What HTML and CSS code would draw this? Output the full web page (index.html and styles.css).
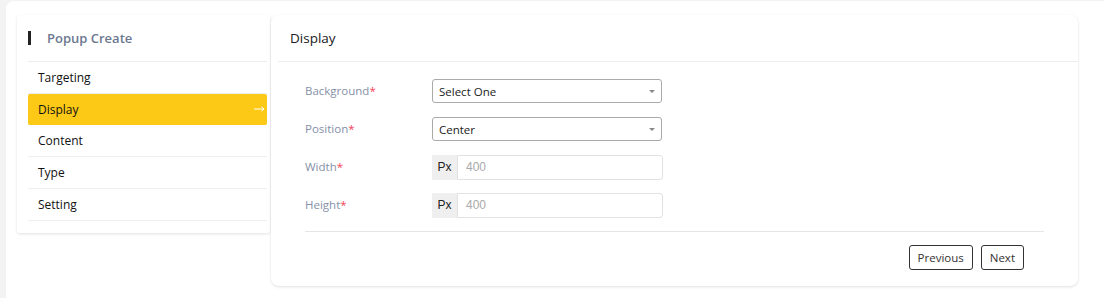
FILE: index.html
```html
<!DOCTYPE html>
<html>
<head>
<meta charset="utf-8">
<link rel="stylesheet" href="styles.css">
</head>
<body>
<div class="page">
  <aside class="side">
    <div class="side-title"><span class="bar"></span><span>Popup Create</span></div>
    <ul class="menu">
      <li class="item">Targeting</li>
      <li class="item active">Display<svg class="arrow" width="11" height="6" viewBox="0 0 11 6"><path d="M0 3H10M7.5 0.8L10 3L7.5 5.2" fill="none" stroke="#fff" stroke-width="1"/></svg></li>
      <li class="item">Content</li>
      <li class="item">Type</li>
      <li class="item">Setting</li>
    </ul>
  </aside>
  <section class="main">
    <div class="main-head">Display</div>
    <div class="form">
      <div class="row">
        <label class="lbl">Background<span class="req">*</span></label>
        <div class="select"><span>Select One</span><span class="caret"></span></div>
      </div>
      <div class="row">
        <label class="lbl">Position<span class="req">*</span></label>
        <div class="select"><span>Center</span><span class="caret"></span></div>
      </div>
      <div class="row">
        <label class="lbl">Width<span class="req">*</span></label>
        <div class="group"><span class="addon">Px</span><span class="inp">400</span></div>
      </div>
      <div class="row">
        <label class="lbl">Height<span class="req">*</span></label>
        <div class="group"><span class="addon">Px</span><span class="inp">400</span></div>
      </div>
      <div class="footer">
        <button class="btn">Previous</button>
        <button class="btn">Next</button>
      </div>
    </div>
  </section>
</div>
</body>
</html>
```

FILE: styles.css
```css
html, body { margin: 0; padding: 0; }
body {
  background: #f3f3f3;
  font-family: "Open Sans", "Liberation Sans", sans-serif;
  width: 1104px;
  height: 298px;
  overflow: hidden;
}
.page {
  margin: 1px 0 0 6px;
  height: 297px;
  background: #fff;
  border-top-left-radius: 8px;
  padding: 14px 26px 0 11px;
  box-sizing: border-box;
  display: flex;
  align-items: flex-start;
  gap: 1px;
}
.side {
  width: 253px;
  background: #fff;
  box-shadow: 0 1px 3px rgba(0,0,0,0.12);
  border-radius: 3px;
  padding: 0 3px 12px 11px;
  box-sizing: border-box;
}
.side-title {
  height: 47px;
  display: flex;
  align-items: center;
  gap: 16px;
  font-size: 13px;
  font-weight: 600;
  color: #6b7890;
  border-bottom: 1px solid #ececec;
  box-sizing: border-box;
}
.bar { width: 3px; height: 14px; background: #222; display: block; }
.menu { list-style: none; margin: 0; padding: 0; }
.item {
  height: 32px;
  box-sizing: border-box;
  border-bottom: 1px solid #eeeeee;
  padding-left: 10px;
  display: flex;
  align-items: center;
  font-size: 12px;
  color: #111;
}
.item.active {
  background: #fcc917;
  border-bottom-color: #fcc917;
  border-radius: 2px;
  justify-content: space-between;
  padding-right: 2px;
  height: 31px;
}
.arrow { display: block; }
.main {
  width: 807px;
  height: 271px;
  background: #fff;
  border-radius: 8px;
  box-shadow: 0 1px 3px rgba(0,0,0,0.13);
  box-sizing: border-box;
}
.main-head {
  height: 47px;
  box-sizing: border-box;
  margin-left: 7px;
  padding-left: 12px;
  display: flex;
  align-items: center;
  font-size: 13.5px;
  color: #1a1a1a;
  border-bottom: 1px solid #ececec;
}
.form {
  padding: 17px 34px 0 34px;
}
.row {
  display: flex;
  align-items: center;
  height: 24px;
  margin-bottom: 14px;
}
.lbl {
  width: 127px;
  font-size: 11.5px;
  color: #8590a8;
  margin-top: -1px;
}
.req { color: #f0455a; }
.select {
  width: 230px;
  height: 24px;
  box-sizing: border-box;
  border: 1px solid #aaaaaa;
  border-radius: 3px;
  display: flex;
  align-items: center;
  justify-content: space-between;
  padding: 0 6px 0 6px;
  font-size: 11.5px;
  color: #222;
}
.caret {
  width: 0; height: 0;
  border-left: 3px solid transparent;
  border-right: 3px solid transparent;
  border-top: 3px solid #888;
}
.group {
  width: 231px;
  height: 25px;
  display: flex;
}
.addon {
  width: 25px;
  background: #efefef;
  font-family: "Liberation Sans", Arial, sans-serif;
  font-size: 12px;
  color: #222;
  display: flex;
  align-items: center;
  justify-content: center;
}
.inp {
  flex: 1;
  border: 1px solid #e2e2e2;
  border-radius: 0 3px 3px 0;
  padding-left: 8px;
  display: flex;
  align-items: center;
  font-family: "Liberation Sans", Arial, sans-serif;
  font-size: 12px;
  color: #aaaaaa;
}
.footer {
  border-top: 1px solid #e6e6e6;
  padding: 13px 20px 0 0;
  display: flex;
  justify-content: flex-end;
  gap: 8px;
}
.btn {
  height: 25px;
  padding: 0 8px;
  border: 1px solid #333;
  border-radius: 3px;
  background: #fff;
  font-family: "Open Sans", "Liberation Sans", sans-serif;
  font-size: 11.5px;
  color: #333;
}
```
